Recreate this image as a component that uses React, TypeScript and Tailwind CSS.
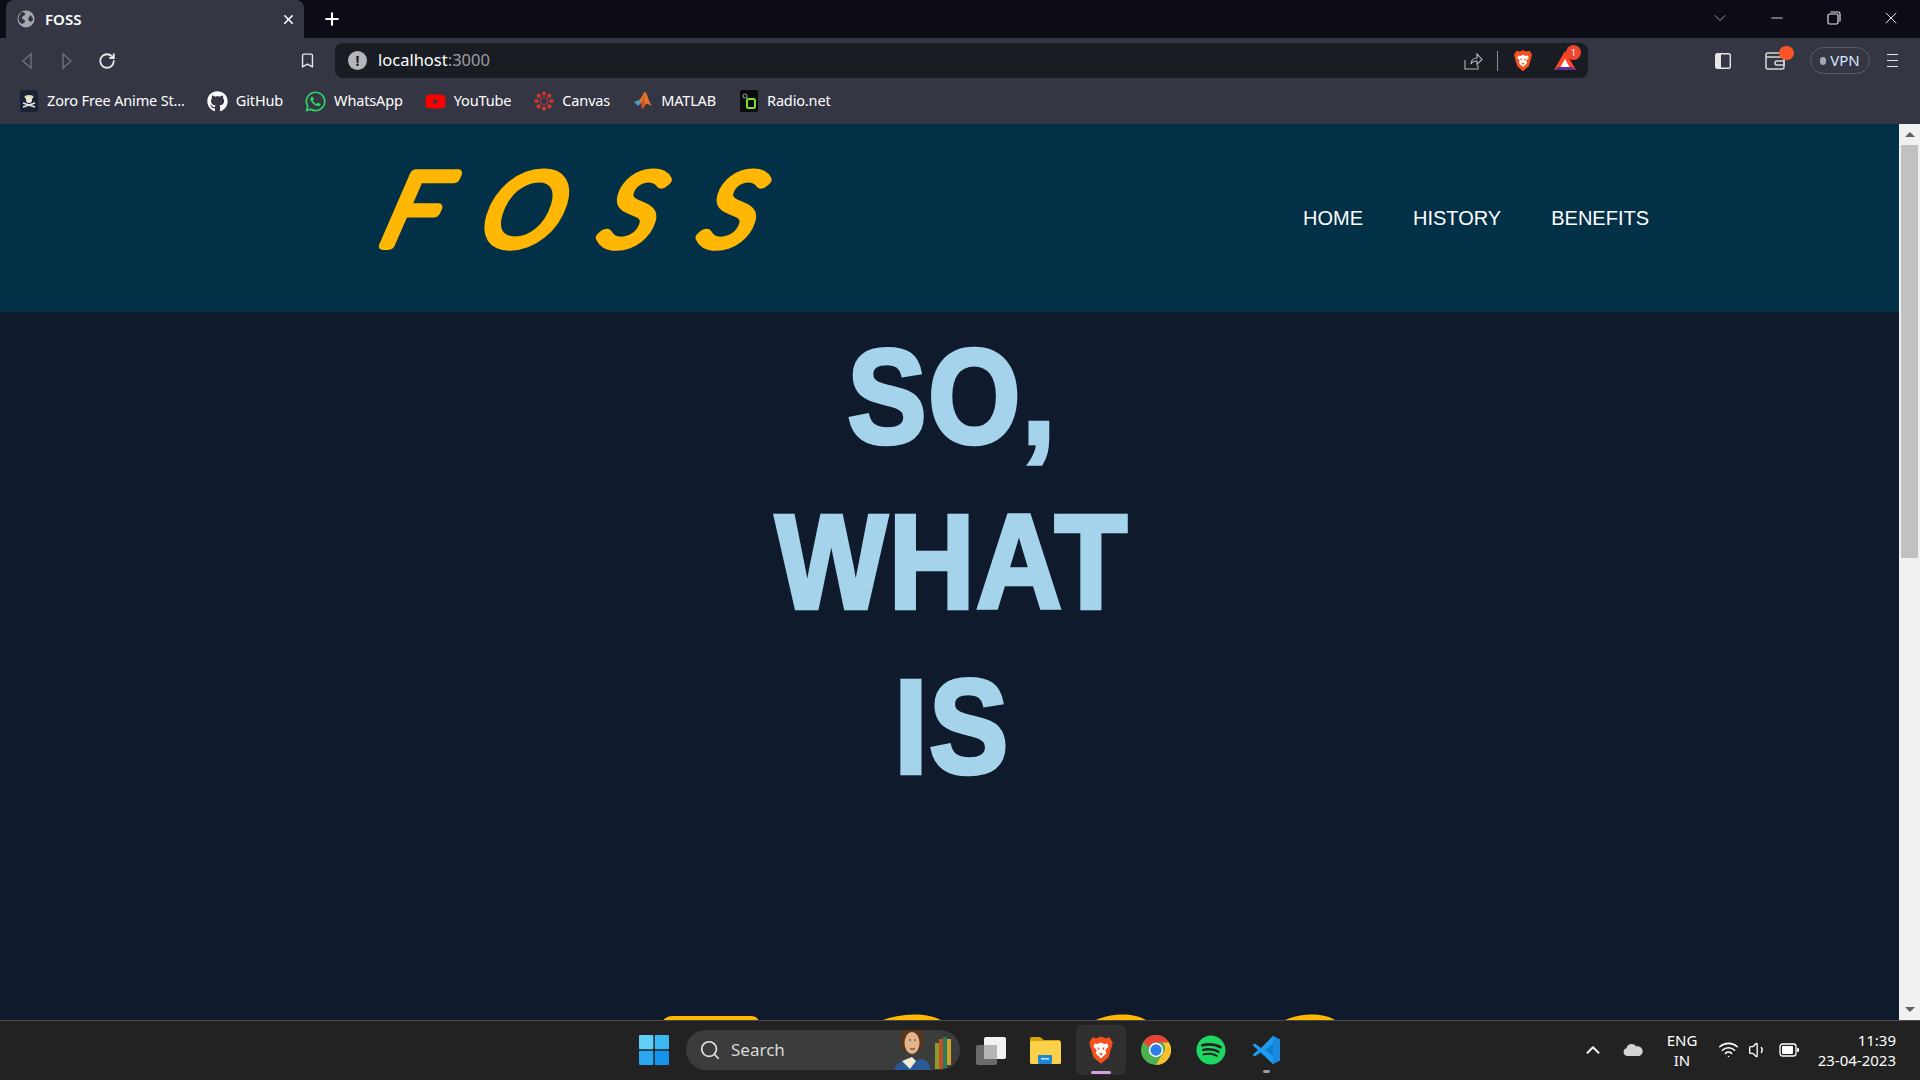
import React from "react";
import { FaGithub, FaWhatsapp, FaSpotify, FaYoutube } from "react-icons/fa";
import { ChevronDown, Minus, X, Plus, RotateCw, Bookmark, ChevronUp, Search, Wifi, Volume1 } from "lucide-react";

const ui = { fontFamily: '"Noto Sans", "Open Sans", sans-serif' };

function Logo({ className }: { className: string }) {
  return (
    <svg viewBox="0 0 400 100" className={className + " overflow-visible"} aria-label="FOSS">
      <text
        y="77"
        x="20 113 227 321"
        transform="skewX(-17) scale(1.06 1)"
        fontFamily="'Lato', 'Open Sans', sans-serif"
        fontStyle="italic"
        fontWeight="300"
        fontSize="100"
        fill="#ffb703"
        stroke="#ffb703"
        strokeWidth="10"
        strokeLinejoin="round"
        strokeLinecap="round"
      >
        FOSS
      </text>
    </svg>
  );
}

function Brave({ size = 22 }: { size?: number }) {
  return (
    <svg width={size} height={size * 1.15} viewBox="0 0 24 28">
      <path d="M4 2l4 1 4-1.5L16 3l4-1 3 5-1 4-3 10-7 6-7-6L2 11 1 7z" fill="#f4511e" />
      <path d="M6 8l3 .5 3-1.5 3 1.5L18 8l1 3-3 3 1 3-5 5-5-5 1-3-3-3z" fill="#fff" />
      <path d="M9 11l2 2-2 1zM15 11l-2 2 2 1zM10 17h4l-2 2.5z" fill="#f4511e" />
    </svg>
  );
}

function Bat() {
  return (
    <svg width="24" height="22" viewBox="0 0 24 22">
      <path d="M12 1L1 20h22z" fill="#ff4724" />
      <path d="M1 20l4-3h14l4 3z" fill="#662d91" />
      <path d="M12 9l4.5 8h-9z" fill="#fff" />
    </svg>
  );
}

function Zoro() {
  return (
    <svg width="20" height="22" viewBox="0 0 20 22">
      <rect x="1" y="0" width="18" height="22" rx="3" fill="#1a2236" />
      <ellipse cx="10" cy="7" rx="4.5" ry="2" fill="#e5d9a8" />
      <circle cx="10" cy="10" r="3" fill="#e8e8e8" />
      <path d="M4 17l12-4M16 17L4 13" stroke="#e8e8e8" strokeWidth="1.6" />
    </svg>
  );
}

function Canvas() {
  const dots = Array.from({ length: 8 }, (_, i) => i * 45);
  return (
    <svg width="20" height="20" viewBox="0 0 20 20">
      {dots.map((a) => (
        <g key={a} transform={`rotate(${a} 10 10)`}>
          <rect x="8.2" y="0.5" width="3.6" height="3.8" rx="1" fill="#d9372c" />
          <circle cx="10" cy="6.2" r="0.9" fill="#d9372c" />
        </g>
      ))}
    </svg>
  );
}

function Matlab() {
  return (
    <svg width="20" height="20" viewBox="0 0 20 20">
      <path d="M1 11l5-2 2 3-3 3z" fill="#4a9cc9" />
      <path d="M6 9c3-1 4-8 6-8 2 0 4 11 7 14-3-1-5-3-6-2s-2 4-4 5c0-3-1-6-3-9z" fill="#e8742a" />
      <path d="M8 12c2-2 3-8 4-11-1 5-1 9 0 12l-3 5z" fill="#c9502a" />
    </svg>
  );
}

function Radio() {
  return (
    <svg width="20" height="22" viewBox="0 0 20 22">
      <rect x="1" width="18" height="22" rx="2" fill="#0b0b0b" />
      <circle cx="6" cy="6" r="2" fill="none" stroke="#8a8a8a" strokeWidth="1.2" />
      <rect x="8" y="9" width="8" height="9" rx="1.5" fill="none" stroke="#7be22b" strokeWidth="2" />
    </svg>
  );
}

function Chrome() {
  return (
    <svg width="30" height="30" viewBox="0 0 30 30">
      <circle cx="15" cy="15" r="15" fill="#4caf50" />
      <path d="M15 0a15 15 0 0 1 13 7.5H15a7.5 7.5 0 0 0-7 4.5L2.2 7.2A15 15 0 0 1 15 0z" fill="#ea4335" />
      <path d="M28 7.5A15 15 0 0 1 15 30l6.5-11a7.5 7.5 0 0 0 0-11.5z" fill="#fbc02d" />
      <circle cx="15" cy="15" r="7.2" fill="#fff" />
      <circle cx="15" cy="15" r="5.7" fill="#2b7de9" />
    </svg>
  );
}

function VSCode() {
  return (
    <svg width="30" height="30" viewBox="0 0 30 30">
      <path d="M22 1l7 3.5v21L22 29 8 16.5z" fill="#0a7fcb" />
      <path d="M22 1l-12 12L4 8.5 1.5 10 7 15l-5.5 5L4 21.5l6-4.5 12 12V21l-8-6 8-6z" fill="#1f9cf0" />
      <path d="M22 1l7 3.5v21L22 29z" fill="#1a8ae0" />
    </svg>
  );
}

function Folder() {
  return (
    <svg width="32" height="28" viewBox="0 0 32 28">
      <path d="M1 3a2 2 0 0 1 2-2h8l4 3h15a1 1 0 0 1 1 1v4H1z" fill="#d9a20b" />
      <rect x="1" y="5" width="31" height="23" rx="1.5" fill="#fbd14b" />
      <rect x="9" y="19" width="14" height="9" rx="1" fill="#1b87d6" />
      <rect x="12" y="22" width="8" height="1.6" fill="#bfe2f7" />
    </svg>
  );
}

function Shakespeare() {
  return (
    <svg width="64" height="46" viewBox="0 0 64 46">
      <path d="M2 46c2-8 8-10 14-12l6 2 8-2c6 2 8 6 9 12z" fill="#2a5a96" />
      <path d="M10 36l10-4 4 4-6 8z" fill="#f1ead5" />
      <ellipse cx="20" cy="15" rx="11" ry="14" fill="#5a3518" />
      <ellipse cx="20" cy="18" rx="7.5" ry="11" fill="#e2b48d" />
      <path d="M17 15h2M22 15h2M18 24h5" stroke="#4a2c14" strokeWidth="1.2" />
      <rect x="43" y="18" width="4" height="26" fill="#8e9a2b" />
      <rect x="47" y="14" width="4" height="30" fill="#c24f27" />
      <rect x="51" y="12" width="4" height="31" fill="#287a5c" />
      <rect x="55" y="14" width="4" height="26" fill="#c9a227" />
    </svg>
  );
}

const bookmarks: [React.ReactNode, string][] = [
  [<Zoro />, "Zoro Free Anime St..."],
  [<FaGithub className="text-white text-[21px]" />, "GitHub"],
  [<FaWhatsapp className="text-[#2fd366] text-[23px]" />, "WhatsApp"],
  [<FaYoutube className="text-[#ff0000] text-[21px]" />, "YouTube"],
  [<Canvas />, "Canvas"],
  [<Matlab />, "MATLAB"],
  [<Radio />, "Radio.net"],
];

export default function App() {
  return (
    <div className="h-screen w-screen overflow-hidden flex flex-col bg-[#0f1b2c]" style={ui}>
      {/* tab strip */}
      <div className="h-[38px] shrink-0 bg-[#0b0c16] flex items-start text-white">
        <div className="ml-[6px] w-[298px] h-[38px] bg-[#343643] rounded-t-lg flex items-center pl-[11px] pr-[8px]">
          <svg width="18" height="18" viewBox="0 0 18 18">
            <circle cx="9" cy="9" r="8.5" fill="#a6a8ae" />
            <path d="M5 2c3 0 4 2 3 3S5 6 5 8s3 1 3 3-2 2-3 3c-2-1-3.500-3-3.500-5S3 3 5 2zM13 5c2 1 3 3 3 5l-2 2-3-2 1-3z" fill="#343643" />
          </svg>
          <span className="ml-[10px] text-[15px] font-semibold">FOSS</span>
          <X size={15} className="ml-auto" strokeWidth={2.5} />
        </div>
        <div className="ml-[18px] h-[38px] flex items-center">
          <Plus size={20} strokeWidth={2.5} />
        </div>
        <div className="ml-auto h-[36px] flex items-center pr-[19px] text-[#e5e5e5]">
          <ChevronDown size={20} strokeWidth={1} className="text-[#b5b5b5]" />
          <Minus size={18} strokeWidth={1.2} className="ml-[38px]" />
          <svg width="14" height="14" viewBox="0 0 14 14" className="ml-[41px]" fill="none" stroke="#e5e5e5" strokeWidth="1.2">
            <rect x="1" y="3" width="10" height="10" rx="1.5" />
            <path d="M3.500 1H11a2 2 0 0 1 2 2v7.500" />
          </svg>
          <X size={20} strokeWidth={1.2} className="ml-[40px]" />
        </div>
      </div>

      {/* toolbar */}
      <div className="h-[45px] shrink-0 bg-[#343643] flex items-center relative">
        <svg width="14" height="20" viewBox="0 0 14 20" fill="none" stroke="#6b6d78" strokeWidth="1.5" className="ml-[20px]">
          <path d="M11 3L3 10l8 7z" />
        </svg>
        <svg width="14" height="20" viewBox="0 0 14 20" fill="none" stroke="#6b6d78" strokeWidth="1.5" className="ml-[26px]">
          <path d="M3 3l8 7-8 7z" />
        </svg>
        <RotateCw size={18} strokeWidth={2.4} className="ml-[24px] text-[#e8e8e8]" />
        <Bookmark size={17} strokeWidth={2} className="ml-[183px] text-[#e8e8e8]" />
        <div className="ml-[19px] w-[1253px] h-[35px] rounded-lg bg-[#1a1c23] flex items-center pl-[13px] pr-[11px]">
          <div className="w-[19px] h-[19px] rounded-full bg-[#b5b6bb] flex items-center justify-center text-[#1a1c23] text-[14px] font-bold leading-none">!</div>
          <span className="ml-[11px] text-[16.500px] text-white leading-none">
            localhost<span className="text-[#9a9ca3]">:3000</span>
          </span>
          <div className="ml-auto flex items-center">
            <svg width="20" height="20" viewBox="0 0 20 20" fill="none" stroke="#b5b6bb" strokeWidth="1.1">
              <path d="M2 9v9h13v-4M8 13c0-4 3-6 6-6V3l5 5.500-5 5V10c-3 0-5 1-6 3z" />
            </svg>
            <div className="ml-[14px] w-px h-[20px] bg-[#8a8c93]" />
            <div className="ml-[15px] flex"><Brave size={20} /></div>
            <div className="ml-[20px] relative flex">
              <Bat />
              <span className="absolute -top-[5px] left-[13px] w-[15px] h-[15px] rounded-full bg-[#f1452e] text-white text-[9px] leading-[15px] text-center">1</span>
            </div>
          </div>
        </div>
        <svg width="16" height="16" viewBox="0 0 16 16" className="ml-[127px]">
          <rect x="0.700" y="0.700" width="14.600" height="14.600" rx="1.500" fill="none" stroke="#e5e5e5" strokeWidth="1.400" />
          <rect x="1" y="1" width="5" height="14" fill="#e5e5e5" />
        </svg>
        <div className="ml-[34px] relative flex">
          <svg width="20" height="18" viewBox="0 0 20 18" fill="none" stroke="#d8d8d8" strokeWidth="1.500">
            <rect x="1" y="1" width="18" height="16" rx="2" />
            <path d="M1 5h18M12 9h7v4h-7a2 2 0 0 1 0-4z" />
          </svg>
          <span className="absolute -top-[6px] left-[14px] w-[15px] h-[14px] rounded-[7px] bg-[#fb542b]" />
        </div>
        <div className="ml-[25px] w-[60px] h-[27px] rounded-full border border-[#5a5c68] flex items-center justify-center gap-[4px] text-[15px] text-[#d6e8ff]">
          <span className="w-[6px] h-[8px] rounded-full bg-[#a4a6ad]" />
          VPN
        </div>
        <div className="ml-[17px] flex flex-col gap-[4.500px]">
          <span className="w-[11px] h-[1.500px] bg-[#e5e5e5]" />
          <span className="w-[11px] h-[1.500px] bg-[#e5e5e5]" />
          <span className="w-[11px] h-[1.500px] bg-[#e5e5e5]" />
        </div>
      </div>

      {/* bookmarks */}
      <div className="h-[41px] shrink-0 bg-[#343643] flex items-center pl-[18px] pb-[5px] gap-[22px] text-white text-[14.500px]">
        {bookmarks.map(([icon, label]) => (
          <div key={label} className="flex items-center gap-[8px]">
            <span className="w-[21px] flex items-center justify-center">{icon}</span>
            <span className="tracking-[-0.15px] whitespace-nowrap">{label}</span>
          </div>
        ))}
      </div>

      {/* page */}
      <div className="flex-1 min-h-0 flex">
        <div className="flex-1 min-w-0 overflow-hidden" style={{ fontFamily: '"Liberation Sans", Arial, sans-serif' }}>
          <header className="h-[188px] bg-[#023047] flex items-center justify-between pl-[380px] pr-[250px]">
            <Logo className="w-[400px] h-[100px]" />
            <nav className="flex gap-[50px] text-[20px] text-white mb-[1px]">
              <span>HOME</span>
              <span>HISTORY</span>
              <span>BENEFITS</span>
            </nav>
          </header>
          <main className="flex flex-col items-center">
            <h1 className="text-[133px] leading-[165px] font-bold text-[#a5d3ec] text-center tracking-[2px] pt-[3px] pl-[5px] scale-x-[0.89] [-webkit-text-stroke:4.5px_#a5d3ec]">
              <div>SO,</div>
              <div>WHAT</div>
              <div>IS</div>
            </h1>
            <div className="mt-[204px] ml-[66px]">
              <Logo className="w-[760px] h-[190px]" />
            </div>
          </main>
        </div>
        <div className="w-[21px] shrink-0 bg-[#f1f1f1] flex flex-col items-center">
          <div className="h-[21px] flex items-center">
            <div className="w-0 h-0 border-x-[5px] border-x-transparent border-b-[5px] border-b-[#606060]" />
          </div>
          <div className="w-[17px] h-[413px] bg-[#c1c1c1]" />
          <div className="mt-auto h-[21px] flex items-center">
            <div className="w-0 h-0 border-x-[5px] border-x-transparent border-t-[5px] border-t-[#606060]" />
          </div>
        </div>
      </div>

      {/* taskbar */}
      <div className="h-[60px] shrink-0 bg-[#222222] border-t border-[#4a4a4a] flex items-center text-white relative pb-[2px]">
        <svg width="30" height="30" viewBox="0 0 30 30" className="ml-[639px]">
          <rect x="0" y="0" width="14.300" height="14.300" rx="1" fill="#5fd0f7" />
          <rect x="15.700" y="0" width="14.300" height="14.300" rx="1" fill="#3ab8f2" />
          <rect x="0" y="15.700" width="14.300" height="14.300" rx="1" fill="#29a8f0" />
          <rect x="15.700" y="15.700" width="14.300" height="14.300" rx="1" fill="#1592ea" />
        </svg>
        <div className="ml-[17px] w-[274px] h-[40px] rounded-full bg-[#3b3d3c] flex items-center pl-[13px] relative overflow-hidden">
          <Search size={22} strokeWidth={1.8} className="text-[#e5e5e5]" />
          <span className="ml-[10px] text-[17px] text-[#d8d8d8]">Search</span>
          <div className="absolute right-[4px] bottom-[-1px] flex">
            <Shakespeare />
          </div>
        </div>
        <svg width="32" height="30" viewBox="0 0 32 30" className="ml-[15px]">
          <rect x="1" y="10" width="21" height="20" rx="2" fill="#6b6b6b" />
          <rect x="9" y="2" width="22" height="22" rx="2" fill="#f2f2f2" />
          <rect x="9" y="10" width="13" height="14" fill="#b5b5b5" />
        </svg>
        <div className="ml-[22px] flex"><Folder /></div>
        <div className="ml-[15px] w-[50px] h-[50px] rounded-md bg-[#2f302f] flex flex-col items-center justify-center relative">
          <Brave size={26} />
          <span className="absolute bottom-[1px] w-[20px] h-[3px] rounded-full bg-[#d3a1e0]" />
        </div>
        <div className="ml-[15px] flex"><Chrome /></div>
        <FaSpotify className="ml-[25px] text-[30px] text-[#1ed760]" />
        <div className="ml-[25px] flex flex-col items-center relative">
          <VSCode />
          <span className="absolute -bottom-[8px] w-[7px] h-[3px] rounded-full bg-[#9a9a9a]" />
        </div>
        <ChevronUp size={22} strokeWidth={2.2} className="ml-[301px] text-[#f0f0f0]" />
        <svg width="20" height="13" viewBox="0 0 20 13" className="ml-[19px]">
          <path d="M4 13a4 4 0 0 1-.5-7.800A5.500 5.500 0 0 1 13.500 3.500 4.500 4.500 0 0 1 16 13z" fill="#d4d4d4" />
        </svg>
        <div className="ml-[17px] w-[44px] text-center text-[15px] leading-[20px]">
          <div>ENG</div>
          <div>IN</div>
        </div>
        <Wifi size={21} strokeWidth={1.8} className="ml-[14px]" />
        <Volume1 size={20} strokeWidth={1.6} className="ml-[9px]" />
        <svg width="20" height="14" viewBox="0 0 20 14" className="ml-[11px]">
          <rect x="1" y="1" width="16" height="12" rx="2.500" fill="none" stroke="#fff" strokeWidth="1.300" />
          <rect x="3" y="3" width="11" height="8" rx="1" fill="#fff" />
          <rect x="18" y="5" width="2" height="4" rx="1" fill="#fff" />
        </svg>
        <div className="ml-auto pr-[24px] text-right text-[15px] leading-[20px]">
          <div>11:39</div>
          <div>23-04-2023</div>
        </div>
      </div>
    </div>
  );
}
